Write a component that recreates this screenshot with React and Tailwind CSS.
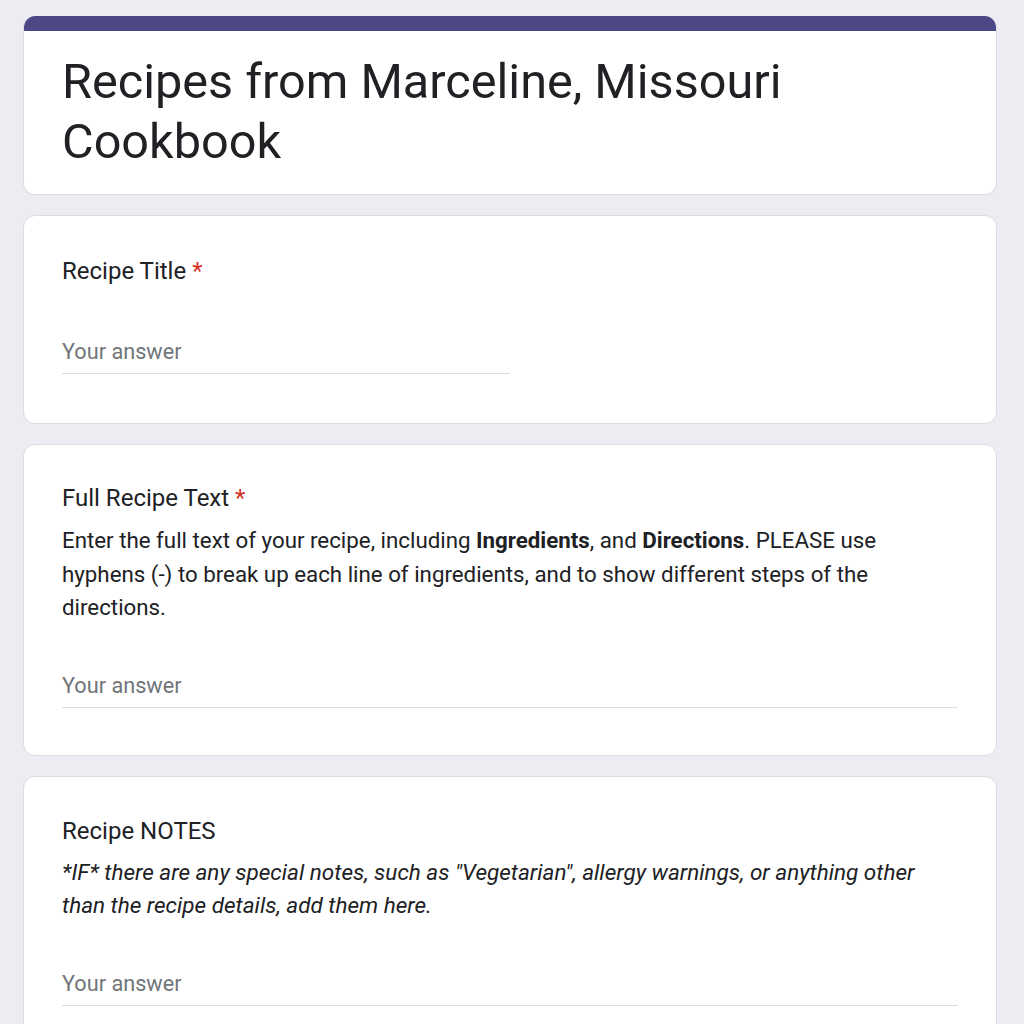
export default function App() {
  const font = { fontFamily: "Roboto, 'Noto Sans', sans-serif" };
  return (
    <div className="min-h-[1024px] w-full bg-[#edecf3] text-[#202124]" style={font}>
      <div className="ml-[23px] flex w-[974px] flex-col gap-[20px] pt-[16px]">
        <div className="overflow-hidden rounded-[12px] border border-[#dadce0] border-t-0 bg-white">
          <div className="h-[15px] bg-[#4c4785]" />
          <div className="px-[38px] pt-[21px] pb-[22px]">
            <h1 className="text-[48.6px] leading-[60px] font-normal">Recipes from Marceline, Missouri Cookbook</h1>
          </div>
        </div>

        <div className="rounded-[12px] border border-[#dadce0] bg-white px-[38px] pt-[37px] pb-[49px]">
          <div className="text-[24px] leading-[36px]">
            Recipe Title <span className="text-[#d93025]">*</span>
          </div>
          <div className="mt-[45px] w-1/2 border-b border-[#dadce0] pb-[3px] text-[21.7px] leading-[36px] text-[#70757a]">
            Your answer
          </div>
        </div>

        <div className="rounded-[12px] border border-[#dadce0] bg-white px-[38px] pt-[35px] pb-[47px]">
          <div className="text-[24px] leading-[36px]">
            Full Recipe Text <span className="text-[#d93025]">*</span>
          </div>
          <p className="mt-[8px] w-[878px] text-[22.3px] leading-[33.5px]">
            Enter the full text of your recipe, including <b className="font-bold">Ingredients</b>, and{" "}
            <b className="font-bold">Directions</b>. PLEASE use hyphens (-) to break up each line of ingredients, and to show different steps of the directions.
          </p>
          <div className="mt-[43px] w-full border-b border-[#dadce0] pb-[3px] text-[21.7px] leading-[36px] text-[#70757a]">
            Your answer
          </div>
        </div>

        <div className="rounded-[12px] border border-[#dadce0] bg-white px-[38px] pt-[36px] pb-[49px]">
          <div className="text-[24px] leading-[36px]">Recipe NOTES</div>
          <p className="mt-[7px] w-[878px] text-[22.5px] italic leading-[33.5px]">
            *IF* there are any special notes, such as "Vegetarian", allergy warnings, or anything other than the recipe details, add them here.
          </p>
          <div className="mt-[43px] w-full border-b border-[#dadce0] pb-[3px] text-[21.7px] leading-[36px] text-[#70757a]">
            Your answer
          </div>
        </div>
      </div>
    </div>
  );
}
